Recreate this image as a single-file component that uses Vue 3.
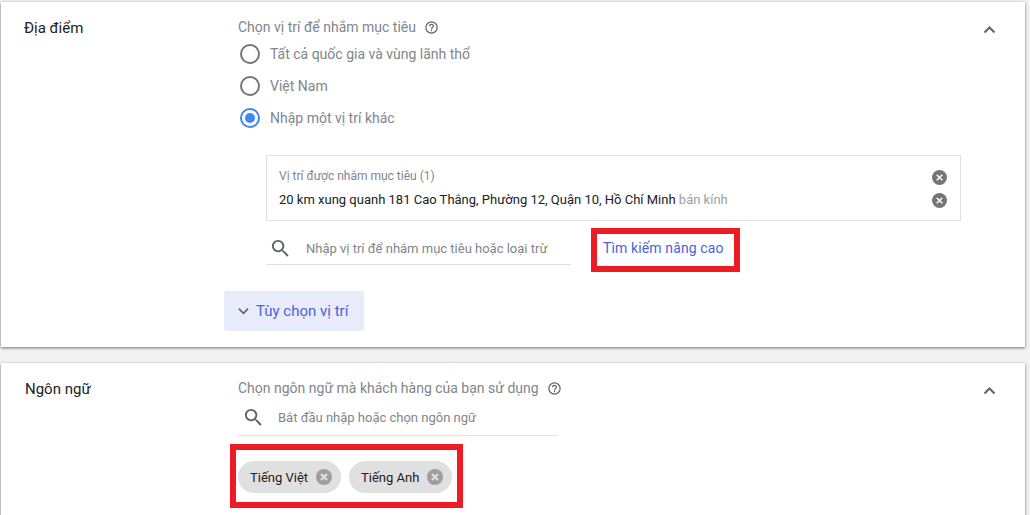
<script setup>
const radios = [
  { label: 'Tất cả quốc gia và vùng lãnh thổ', on: false },
  { label: 'Việt Nam', on: false },
  { label: 'Nhập một vị trí khác', on: true }
]
const chips = ['Tiếng Việt', 'Tiếng Anh']
</script>

<template>
  <div class="page">
    <section class="card first">
      <div class="label">Địa điểm</div>
      <div class="content">
        <div class="title">
          <span>Chọn vị trí để nhắm mục tiêu</span>
          <svg class="help" viewBox="0 0 24 24"><path d="M12 2a10 10 0 1 0 0 20 10 10 0 0 0 0-20zm0 18a8 8 0 1 1 0-16 8 8 0 0 1 0 16zm-1-4h2v2h-2zm1-10a4 4 0 0 0-4 4h2a2 2 0 1 1 4 0c0 2-3 1.75-3 5h2c0-2.250 3-2.500 3-5a4 4 0 0 0-4-4z"/></svg>
        </div>
        <div v-for="r in radios" :key="r.label" class="radio-row">
          <span class="radio" :class="{ on: r.on }"></span>
          <span>{{ r.label }}</span>
        </div>
        <div class="targets">
          <div class="targets-text">
            <div class="targets-title">Vị trí được nhắm mục tiêu (1)</div>
            <div class="targets-line">20 km xung quanh 181 Cao Thắng, Phường 12, Quận 10, Hồ Chí Minh <span class="muted">bán kính</span></div>
          </div>
          <div class="targets-icons">
            <svg v-for="n in 2" :key="n" class="x-icon" viewBox="0 0 16 16"><circle cx="8" cy="8" r="8" fill="#757575"/><path d="M5 5l6 6M11 5l-6 6" stroke="#fff" stroke-width="1.6"/></svg>
          </div>
        </div>
        <div class="search-row">
          <div class="search location">
            <svg class="search-icon" viewBox="0 0 24 24"><path d="M15.500 14h-.79l-.28-.27A6.471 6.471 0 0 0 16 9.500 6.500 6.500 0 1 0 9.500 16c1.610 0 3.090-.59 4.230-1.570l.27.28v.79l5 4.990L20.490 19l-4.990-5zm-6 0C7.010 14 5 11.990 5 9.500S7.010 5 9.500 5 14 7.010 14 9.500 11.990 14 9.500 14z"/></svg>
            <span>Nhập vị trí để nhắm mục tiêu hoặc loại trừ</span>
          </div>
          <div class="red-box link-box"><span class="link">Tìm kiếm nâng cao</span></div>
        </div>
        <div class="options">
          <svg class="options-chevron" viewBox="0 0 12 8"><path d="M1 1.500l5 5 5-5" fill="none" stroke="#5f6368" stroke-width="1.800"/></svg>
          <span>Tùy chọn vị trí</span>
        </div>
      </div>
      <svg class="collapse" viewBox="0 0 12 8"><path d="M1 6.500l5-5 5 5" fill="none" stroke="#5f6368" stroke-width="2"/></svg>
    </section>

    <section class="card second">
      <div class="label">Ngôn ngữ</div>
      <div class="content">
        <div class="title">
          <span>Chọn ngôn ngữ mà khách hàng của bạn sử dụng</span>
          <svg class="help" viewBox="0 0 24 24"><path d="M12 2a10 10 0 1 0 0 20 10 10 0 0 0 0-20zm0 18a8 8 0 1 1 0-16 8 8 0 0 1 0 16zm-1-4h2v2h-2zm1-10a4 4 0 0 0-4 4h2a2 2 0 1 1 4 0c0 2-3 1.75-3 5h2c0-2.250 3-2.500 3-5a4 4 0 0 0-4-4z"/></svg>
        </div>
        <div class="search language">
          <svg class="search-icon" viewBox="0 0 24 24"><path d="M15.500 14h-.79l-.28-.27A6.471 6.471 0 0 0 16 9.500 6.500 6.500 0 1 0 9.500 16c1.610 0 3.090-.59 4.230-1.570l.27.28v.79l5 4.990L20.490 19l-4.990-5zm-6 0C7.010 14 5 11.990 5 9.500S7.010 5 9.500 5 14 7.010 14 9.500 11.990 14 9.500 14z"/></svg>
          <span>Bắt đầu nhập hoặc chọn ngôn ngữ</span>
        </div>
        <div class="red-box chips">
          <div v-for="c in chips" :key="c" class="chip">
            <span>{{ c }}</span>
            <svg class="chip-x" viewBox="0 0 16 16"><circle cx="8" cy="8" r="8" fill="#9e9e9e"/><path d="M5 5l6 6M11 5l-6 6" stroke="#e0e0e0" stroke-width="2.200"/></svg>
          </div>
        </div>
      </div>
      <svg class="collapse" viewBox="0 0 12 8"><path d="M1 6.500l5-5 5 5" fill="none" stroke="#5f6368" stroke-width="2"/></svg>
    </section>
  </div>
</template>

<style>
html, body { margin: 0; background: #f3f3f3; overflow: hidden; }
</style>

<style scoped>
.page {
  height: 515px;
  overflow: hidden;
  box-sizing: border-box;
  padding: 2px 5px 0 1px;
  font-family: Roboto, "Noto Sans", sans-serif;
  font-size: 14px;
  color: #80868b;
}
.card {
  position: relative;
  display: grid;
  grid-template-columns: 237px 1fr;
  background: #fff;
  box-shadow: 0 1px 3px rgba(0, 0, 0, 0.55);
}
.first { height: 345px; margin-bottom: 16px; }
.second { height: 160px; }
.label { padding: 17px 0 0 23px; font-size: 15px; line-height: 18px; color: #202124; }
.second .label { padding: 17px 0 0 24px; }
.title { display: flex; align-items: center; gap: 8px; height: 18px; margin-top: 16px; line-height: 18px; }
.help { width: 15px; height: 15px; fill: #5f6368; }
.radio-row { display: flex; align-items: center; gap: 10px; height: 32px; margin-left: 2px; }
.first .title + .radio-row { margin-top: 2px; }
.radio { box-sizing: border-box; width: 20px; height: 20px; border: 2px solid #757575; border-radius: 50%; }
.radio.on { border-color: #4285f4; background: #4285f4; background-clip: content-box; padding: 3px; }
.targets {
  display: flex;
  justify-content: space-between;
  box-sizing: border-box;
  width: 695px;
  height: 66px;
  margin: 21px 0 0 28px;
  padding: 12px 13px 0 12px;
  border: 1px solid #e0e0e0;
}
.targets-title { font-size: 12px; line-height: 16px; }
.targets-line { margin-top: 7px; font-size: 13px; line-height: 18px; color: #202124; }
.muted { color: #9aa0a6; }
.targets-icons { display: flex; flex-direction: column; gap: 8px; padding-top: 2px; }
.x-icon { width: 15px; height: 15px; }
.search-row { display: flex; align-items: flex-start; gap: 20px; margin: 7px 0 0 28px; }
.search { display: flex; align-items: center; box-sizing: border-box; border-bottom: 1px solid #e0e0e0; font-size: 13px; color: #80868b; }
.location { width: 305px; height: 37px; gap: 14px; padding: 4px 0 0 3px; }
.language { width: 320px; height: 38px; gap: 13px; padding: 2px 0 0 4px; margin-top: 1px; }
.search-icon { width: 23px; height: 23px; flex: none; fill: #5f6368; }
.red-box { box-sizing: border-box; border: 6px solid #ed1c24; }
.link-box { display: flex; align-items: center; width: 149px; height: 44px; padding: 0 0 4px 6px; }
.link { color: #4b63d8; font-size: 14px; letter-spacing: 0.12px; }
.options {
  display: inline-flex;
  align-items: center;
  gap: 7px;
  box-sizing: border-box;
  width: 140px;
  height: 40px;
  margin: 19px 0 0 -14px;
  padding-left: 14px;
  border-radius: 2px;
  background: #e8ecfa;
  color: #4b63d8;
  font-size: 15px;
}
.options-chevron { width: 11px; height: 8px; }
.chips {
  display: flex;
  align-items: center;
  gap: 8px;
  width: 233px;
  height: 64px;
  margin: 8px 0 0 -8px;
  padding: 2px 0 0 2px;
}
.chip {
  display: flex;
  align-items: center;
  justify-content: space-between;
  box-sizing: border-box;
  width: 103px;
  height: 32px;
  padding: 0 9px 0 12px;
  border-radius: 16px;
  background: #e0e0e0;
  font-size: 13px;
  color: #202124;
}
.chip-x { width: 16px; height: 16px; }
.collapse { position: absolute; top: 24px; right: 29px; width: 13px; height: 8px; }
</style>
